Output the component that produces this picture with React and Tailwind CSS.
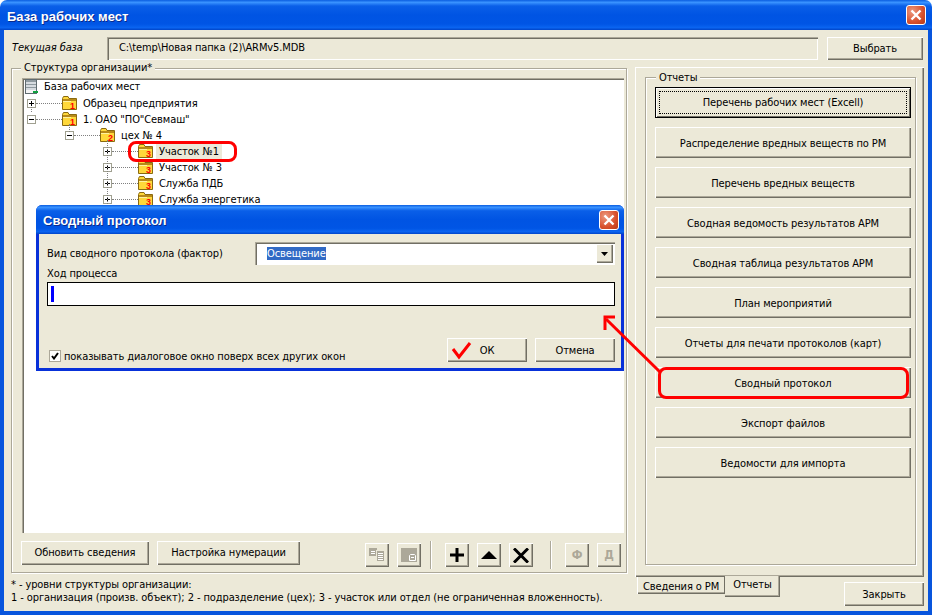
import React from 'react';

const raised = 'bg-[#ece9d8] shadow-[inset_1px_1px_0_#fff,inset_-1px_-1px_0_#716f64,inset_-2px_-2px_0_#aca899]';
const sunken = 'shadow-[inset_1px_1px_0_#aca899,inset_2px_2px_0_#716f64,inset_-1px_-1px_0_#fff]';
const titleBg = 'bg-[linear-gradient(180deg,#0a5de0_0%,#3a93ff_8%,#0a5fe8_20%,#0054e3_50%,#0055e5_80%,#0a64f0_92%,#0044c8_100%)]';

const reports = [
  'Распределение вредных веществ по РМ',
  'Перечень вредных веществ',
  'Сводная ведомость результатов АРМ',
  'Сводная таблица результатов АРМ',
  'План мероприятий',
  'Отчеты для печати протоколов (карт)',
  'Сводный протокол',
  'Экспорт файлов',
  'Ведомости для импорта',
];

const treeRows = [
  { label: 'Образец предприятия', num: 1, pad: 'pl-[2px]', sign: '+', line: 'w-[26px]' },
  { label: '1. ОАО "ПО"Севмаш"', num: 1, pad: 'pl-[2px]', sign: '-', line: 'w-[26px]' },
  { label: 'цех № 4', num: 2, pad: 'pl-[40px]', sign: '-', line: 'w-[26px]' },
  { label: 'Участок №1', num: 3, pad: 'pl-[78px]', sign: '+', line: 'w-[26px]', selected: true },
  { label: 'Участок № 3', num: 3, pad: 'pl-[78px]', sign: '+', line: 'w-[26px]' },
  { label: 'Служба ПДБ', num: 3, pad: 'pl-[78px]', sign: '+', line: 'w-[26px]' },
  { label: 'Служба энергетика', num: 3, pad: 'pl-[78px]', sign: '+', line: 'w-[26px]' },
];

const Button = ({ children, className = '' }) => (
  <button className={`flex shrink-0 items-center justify-center text-black ${raised} ${className}`}>{children}</button>
);

const CloseButton = ({ className = '' }) => (
  <div className={`flex items-center justify-center rounded-[3px] border border-white bg-[radial-gradient(circle_at_30%_30%,#ec9a80,#d8502c_60%,#b83a18)] ${className}`}>
    <svg width="12" height="12" viewBox="0 0 12 12">
      <path d="M1.5 1.5 L10.5 10.5 M10.5 1.5 L1.5 10.5" stroke="#fff" strokeWidth="2.4" />
    </svg>
  </div>
);

const Folder = ({ num }) => (
  <svg width="15" height="14" viewBox="0 0 15 14" className="shrink-0">
    <path d="M0.5 2.5 L0.5 13.5 L14.5 13.5 L14.5 2.5 L7 2.5 L6 0.5 L1.5 0.5 Z" fill="#ffd83a" stroke="#8a6a10" />
    <rect x="1" y="3" width="13" height="2" fill="#b88a18" />
    <rect x="1" y="5" width="8" height="1" fill="#fff2a0" />
    <text x="10.5" y="13" fontSize="9" fontWeight="700" textAnchor="middle" fill="#f00" fontFamily="Liberation Sans, sans-serif">{num}</text>
  </svg>
);

const DbIcon = () => (
  <svg width="14" height="16" viewBox="0 0 14 16" className="shrink-0">
    <rect x="0.5" y="0.5" width="11" height="14" fill="#d6dbe0" stroke="#5f6b70" />
    <rect x="1" y="1" width="10" height="2" fill="#8f9aa0" />
    <rect x="1" y="5" width="10" height="1" fill="#8f9aa0" />
    <rect x="1" y="8" width="10" height="1" fill="#8f9aa0" />
    <rect x="1" y="11" width="10" height="3" fill="#f5f5f5" />
    <rect x="8" y="12" width="5" height="2" fill="#10a040" />
  </svg>
);

const ExpandBox = ({ sign }) => (
  <div className="relative h-[9px] w-[9px] shrink-0 border border-[#a0a090] bg-white">
    <div className="absolute left-[1px] top-[3px] h-px w-[5px] bg-black" />
    {sign === '+' && <div className="absolute left-[3px] top-[1px] h-[5px] w-px bg-black" />}
  </div>
);

const TreeRow = ({ row }) => (
  <div className={`flex h-4 items-center ${row.pad}`}>
    <ExpandBox sign={row.sign} />
    <div className={`border-t border-dotted border-[#808080] ${row.line}`} />
    <Folder num={row.num} />
    <span className={`ml-[3px] px-[3px] leading-[15px] ${row.selected ? 'bg-[#ece9d8]' : ''}`}>{row.label}</span>
  </div>
);

const Tree = () => (
  <div className={`relative h-[455px] bg-white pl-[3px] pt-px ${sunken}`}>
    <div className="flex h-4 items-center">
      <DbIcon />
      <span className="ml-[5px]">База рабочих мест</span>
    </div>
    {treeRows.map((row) => (
      <TreeRow key={row.label} row={row} />
    ))}
    <div className="absolute left-[9px] top-[29px] h-[5px] border-l border-dotted border-[#808080]" />
    <div className="absolute left-[47px] top-[46px] h-[8px] border-l border-dotted border-[#808080]" />
    <div className="absolute left-[85px] top-[62px] h-[72px] border-l border-dotted border-[#808080]" />
  </div>
);

const ToolIcon = ({ type }) => {
  if (type === 'plus') return <svg width="14" height="14" viewBox="0 0 14 14"><path d="M7 0 V14 M0 7 H14" stroke="#000" strokeWidth="3" /></svg>;
  if (type === 'up') return <svg width="16" height="8" viewBox="0 0 16 8"><path d="M8 0 L16 8 L0 8 Z" fill="#000" /></svg>;
  if (type === 'x') return <svg width="16" height="15" viewBox="0 0 16 15"><path d="M1 0.5 L15 14.5 M15 0.5 L1 14.5" stroke="#000" strokeWidth="3" /></svg>;
  return (
    <svg width="16" height="14" viewBox="0 0 16 14">
      {type === 'docs' ? (
        <>
          <rect x="0" y="0" width="8" height="8" fill="#aca899" />
          <rect x="7.5" y="2.5" width="8" height="11" fill="#aca899" stroke="#ece9d8" />
          <path d="M2 3.5 H6 M2 5.5 H6 M9 5.5 H14 M9 7.5 H14 M9 9.5 H14 M9 11.5 H14" stroke="#fff" />
        </>
      ) : (
        <>
          <rect x="0" y="0" width="16" height="14" fill="#aca899" />
          <path d="M9.5 6.5 H13.5 L14.5 7.5 V12.5 H8.5 V7.5 Z M10 9.5 H13" fill="none" stroke="#fff" />
        </>
      )}
    </svg>
  );
};

const Toolbar = () => (
  <div className="ml-[65px] flex items-center">
    <Button className="h-6 w-6"><ToolIcon type="docs" /></Button>
    <Button className="ml-2 h-6 w-6"><ToolIcon type="doc" /></Button>
    <div className="ml-[9px] h-[28px] w-[2px] border-x border-l-[#aca899] border-r-white" />
    <Button className="ml-[13px] h-6 w-6"><ToolIcon type="plus" /></Button>
    <Button className="ml-2 h-6 w-6"><ToolIcon type="up" /></Button>
    <Button className="ml-2 h-6 w-6"><ToolIcon type="x" /></Button>
    <div className="ml-[17px] h-[28px] w-[2px] border-x border-l-[#aca899] border-r-white" />
    <Button className="ml-[13px] h-6 w-6 text-[12px] font-bold"><span className="text-[#aca899]">Ф</span></Button>
    <Button className="ml-2 h-6 w-6 text-[12px] font-bold"><span className="text-[#aca899]">Д</span></Button>
  </div>
);

const Dialog = () => (
  <div className="absolute left-[36px] top-[205px] flex h-[166px] w-[588px] flex-col rounded-t-[6px] bg-[#0831d9]">
    <div className={`flex h-[29px] shrink-0 items-center justify-between rounded-t-[6px] pl-[7px] pr-[5px] ${titleBg}`}>
      <span className="pt-[3px] font-['Liberation_Sans',sans-serif] text-[13px] font-bold tracking-normal text-white [text-shadow:1px_1px_0_#0a2a8c]">Сводный протокол</span>
      <CloseButton className="h-[20px] w-[20px]" />
    </div>
    <div className="mx-[3px] mb-[3px] flex-1 bg-[#ece9d8] pl-[8px] pr-[6px]">
      <div className="mt-[8px] flex h-[23px] items-center">
        <span className="w-[208px] pt-[2px]">Вид сводного протокола (фактор)</span>
        <div className={`flex h-[23px] w-[360px] items-center justify-between bg-white pl-[12px] pr-[2px] ${sunken}`}>
          <span className="bg-[#316ac5] leading-[13px] text-white">Освещение</span>
          <div className={`flex h-[19px] w-[17px] items-center justify-center ${raised}`}>
            <svg width="7" height="4" viewBox="0 0 7 4"><path d="M0 0 H7 L3.5 4 Z" fill="#000" /></svg>
          </div>
        </div>
      </div>
      <div className="mt-[1px] leading-[15px]">Ход процесса</div>
      <div className="mt-[1px] h-[24px] w-[568px] border border-black bg-white p-[3px]">
        <div className="h-[16px] w-[3px] bg-[#0000ff]" />
      </div>
      <div className="mt-[32px] flex h-6 items-end">
        <div className="ml-[2px] flex h-[12px] w-[12px] items-center justify-center border border-[#aca899] bg-white">
          <svg width="8" height="8" viewBox="0 0 8 8"><path d="M1 4 L3 6.5 L7 1" fill="none" stroke="#000" strokeWidth="2" /></svg>
        </div>
        <span className="ml-[3px] translate-y-px whitespace-nowrap leading-[13px]">показывать диалоговое окно поверх всех других окон</span>
        <Button className="ml-auto h-6 w-20 pt-[2px]">ОК</Button>
        <Button className="ml-2 h-6 w-20 pt-[2px]">Отмена</Button>
      </div>
    </div>
  </div>
);

const Annotations = () => (
  <>
    <div className="pointer-events-none absolute left-[128px] top-[141px] h-[21px] w-[109px] rounded-[8px] border-[3px] border-[#f00]" />
    <div className="pointer-events-none absolute left-[658px] top-[367px] h-[32px] w-[251px] rounded-[8px] border-[3px] border-[#f00]" />
    <svg className="pointer-events-none absolute left-0 top-0" width="932" height="615" viewBox="0 0 932 615">
      <path d="M660 372 L606 319" stroke="#f00" strokeWidth="3" fill="none" />
      <path d="M605 330 V317 H615" stroke="#f00" strokeWidth="3" fill="none" />
      <path d="M453 349 L459 357 L470 343" stroke="#f00" strokeWidth="3" fill="none" />
    </svg>
  </>
);

const App = () => (
  <div className="relative flex h-[615px] w-[932px] flex-col overflow-hidden bg-white font-['DejaVu_Sans_Condensed','Liberation_Sans',sans-serif] text-[11px] tracking-[-0.1px] text-black">
    <div className={`flex h-[30px] shrink-0 items-center justify-between rounded-t-[7px] pl-[7px] pr-[6px] ${titleBg}`}>
      <span className="pt-[3px] font-['Liberation_Sans',sans-serif] text-[13px] font-bold tracking-normal text-white [text-shadow:1px_1px_0_#0a2a8c]">База рабочих мест</span>
      <CloseButton className="h-[20px] w-[20px]" />
    </div>
    <div className="flex flex-1 flex-col border-x-4 border-b-4 border-[#0855dd] bg-[#ece9d8]">
      <div className="mt-[7px] flex h-[23px] items-center">
        <span className="ml-[8px] w-[95px] italic">Текущая база</span>
        <div className={`flex h-[23px] w-[711px] items-center pl-[12px] ${sunken}`}>C:\temp\Новая папка (2)\ARMv5.MDB</div>
        <Button className="ml-[9px] h-[23px] w-[96px] pt-[2px]">Выбрать</Button>
      </div>
      <div className="mt-[7px] flex flex-1">
        <div className="ml-[7px] flex w-[616px] flex-col">
          <div className="relative mt-[1px] h-[505px] border border-[#aca899] pl-[10px] pr-[2px] pt-[9px] shadow-[inset_1px_1px_0_#fff,1px_1px_0_#fff]">
            <span className="absolute left-[9px] top-[-8px] bg-[#ece9d8] px-[3px] leading-[13px]">Структура организации*</span>
            <Tree />
            <div className="-ml-px mt-[8px] flex">
              <Button className="h-6 w-[128px] pt-px">Обновить сведения</Button>
              <Button className="ml-2 h-6 w-[143px] pt-px">Настройка нумерации</Button>
              <Toolbar />
            </div>
          </div>
          <div className="mt-[5px] whitespace-nowrap leading-[13px]">
            <div>* - уровни структуры организации:</div>
            <div>1 - организация (произв. объект); 2 - подразделение (цех); 3 - участок или отдел (не ограниченная вложенность).</div>
          </div>
        </div>
        <div className="ml-[8px] flex w-[289px] flex-col">
          <div className="h-[510px] bg-[#ece9d8] px-[10px] py-[10px] shadow-[inset_1px_1px_0_#fff,inset_-1px_-1px_0_#716f64,inset_-2px_-2px_0_#aca899]">
            <div className="relative h-[488px] w-[271px] border border-[#aca899] pl-[9px] pt-[9px] shadow-[inset_1px_1px_0_#fff,1px_1px_0_#fff]">
              <span className="absolute left-[10px] top-[-7px] bg-[#ece9d8] px-[3px] leading-[13px]">Отчеты</span>
              <div className="relative flex h-[31px] w-[256px] items-center justify-center border border-black bg-[#ece9d8] pt-[2px] shadow-[inset_1px_1px_0_#fff,inset_-1px_-1px_0_#716f64]">
                Перечень рабочих мест (Excell)
                <div className="absolute inset-[3px] border border-dotted border-black" />
              </div>
              <div className="mt-[9px] flex flex-col gap-[9px]">
                {reports.map((name) => (
                  <Button key={name} className="h-[31px] w-[256px] pt-[3px]">{name}</Button>
                ))}
              </div>
            </div>
          </div>
          <div className="flex items-start">
            <div className="ml-[2px] flex h-[17px] w-[88px] items-center justify-center bg-[#ece9d8] pt-[3px] shadow-[inset_1px_0_0_#fff,inset_-1px_-1px_0_#716f64,inset_0_-2px_0_#aca899]">Сведения о РМ</div>
            <div className="relative -top-px flex h-[21px] w-[55px] items-center justify-center bg-[#ece9d8] pb-[3px] shadow-[inset_-1px_-1px_0_#716f64,inset_-2px_-2px_0_#aca899]">Отчеты</div>
            <Button className="ml-[64px] mt-[5px] h-6 w-20 pt-[3px]">Закрыть</Button>
          </div>
        </div>
      </div>
    </div>
    <Dialog />
    <Annotations />
  </div>
);

export default App;
